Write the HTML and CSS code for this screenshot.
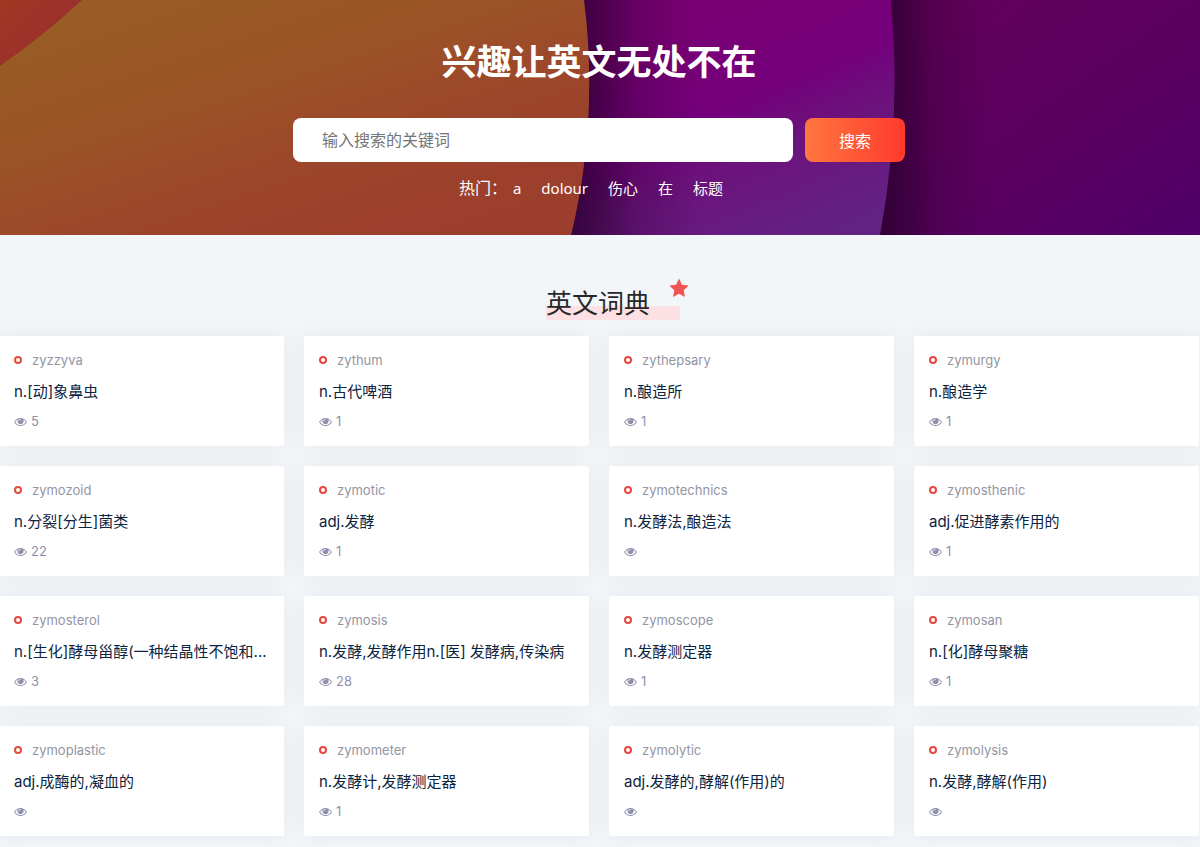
FILE: index.html
```html
<!DOCTYPE html>
<html lang="zh-CN">
<head>
<meta charset="utf-8">
<meta name="viewport" content="width=device-width, initial-scale=1">
<title>英文词典</title>
<link rel="stylesheet" href="styles.css">
</head>
<body>
<header class="hero">
  <svg class="hero-art" viewBox="0 0 1200 235" preserveAspectRatio="none" aria-hidden="true">
    <defs>
      <linearGradient id="far" gradientUnits="userSpaceOnUse" x1="960" y1="0" x2="1160" y2="280">
        <stop offset="0" stop-color="#63005c"/><stop offset=".5" stop-color="#5a0060"/><stop offset="1" stop-color="#4e006a"/>
      </linearGradient>
      <linearGradient id="mid" gradientUnits="userSpaceOnUse" x1="700" y1="20" x2="800" y2="260">
        <stop offset="0" stop-color="#7a0075"/><stop offset=".35" stop-color="#74007c"/><stop offset=".55" stop-color="#6c127c"/><stop offset="1" stop-color="#622484"/>
      </linearGradient>
      <linearGradient id="near" gradientUnits="userSpaceOnUse" x1="160" y1="0" x2="250" y2="270">
        <stop offset="0" stop-color="#985c24"/><stop offset=".5" stop-color="#9c5028"/><stop offset="1" stop-color="#9c4429"/>
      </linearGradient>
      <linearGradient id="warm" gradientUnits="userSpaceOnUse" x1="400" y1="40" x2="470" y2="260">
        <stop offset="0" stop-color="#9c3c2e" stop-opacity="0"/><stop offset="1" stop-color="#9c3c2e" stop-opacity=".8"/>
      </linearGradient>
      <linearGradient id="corner" gradientUnits="userSpaceOnUse" x1="0" y1="10" x2="40" y2="45">
        <stop offset="0" stop-color="#9f3723"/><stop offset="1" stop-color="#9c302c"/>
      </linearGradient>
      <linearGradient id="shade" x1="0" y1="0" x2="1" y2="0">
        <stop offset="0" stop-color="#200024" stop-opacity=".72"/><stop offset=".2" stop-color="#200024" stop-opacity=".55"/><stop offset=".5" stop-color="#200024" stop-opacity=".22"/><stop offset="1" stop-color="#200024" stop-opacity="0"/>
      </linearGradient>
    </defs>
    <rect width="1200" height="235" fill="url(#far)"/>
    <rect x="880" width="110" height="235" fill="url(#shade)"/>
    <path d="M0 0H891Q902 118 880 235H0Z" fill="url(#mid)"/>
    <path d="M571 0H700V235H571Z" fill="url(#shade)"/>
    <path d="M0 0H584Q599 118 571 235H0Z" fill="url(#near)"/>
    <path d="M0 0H584Q599 118 571 235H0Z" fill="url(#warm)"/>
    <path d="M0 0H82Q43 36 0 66Z" fill="url(#corner)"/>
  </svg>
  <div class="hero-body">
    <h1 class="hero-title">兴趣让英文无处不在</h1>
    <form class="search">
      <input class="search-input" type="text" placeholder="输入搜索的关键词" aria-label="输入搜索的关键词">
      <button class="search-button" type="submit">搜索</button>
    </form>
    <nav class="hot" aria-label="热门">
      <span class="hot-label">热门：</span>
      <a href="#">a</a><a href="#">dolour</a><a href="#">伤心</a><a href="#">在</a><a href="#">标题</a>
    </nav>
  </div>
</header>
<svg class="sprite" aria-hidden="true">
  <symbol id="eye" viewBox="0 0 1792 1280">
    <path fill="currentColor" d="M1664 704q-152-236-381-353 61 104 61 225 0 185-131.500 316.500t-316.500 131.500-316.500-131.500-131.500-316.500q0-121 61-225-229 117-381 353 133 205 333.500 326.500t434.500 121.500 434.500-121.500 333.500-326.500zm-720-384q0-20-14-34t-34-14q-125 0-214.500 89.500t-89.500 214.500q0 20 14 34t34 14 34-14 14-34q0-86 61-147t147-61q20 0 34-14t14-34zm848 384q0 34-20 69-140 230-376.500 368.500t-499.500 138.500-499.500-139-376.500-368q-20-35-20-69t20-69q140-229 376.500-368t499.500-139 499.500 139 376.500 368q20 35 20 69z"/>
  </symbol>
</svg>
<main class="section">
  <h2 class="section-title"><span class="section-text">英文词典</span>
    <svg class="section-star" viewBox="0 0 20 20" aria-hidden="true"><path fill="#f05454" d="M10 .5l2.900 6.200 6.800.8-5 4.700 1.300 6.900-6-3.400-6 3.400 1.300-6.900-5-4.700 6.800-.8z"/></svg>
  </h2>
  <div class="grid">
    <a class="card" href="#"><span class="word">zyzzyva</span><h3 class="meaning">n.[动]象鼻虫</h3><span class="views"><svg class="eye"><use href="#eye"/></svg>5</span></a>
    <a class="card" href="#"><span class="word">zythum</span><h3 class="meaning">n.古代啤酒</h3><span class="views"><svg class="eye"><use href="#eye"/></svg>1</span></a>
    <a class="card" href="#"><span class="word">zythepsary</span><h3 class="meaning">n.酿造所</h3><span class="views"><svg class="eye"><use href="#eye"/></svg>1</span></a>
    <a class="card" href="#"><span class="word">zymurgy</span><h3 class="meaning">n.酿造学</h3><span class="views"><svg class="eye"><use href="#eye"/></svg>1</span></a>
    <a class="card" href="#"><span class="word">zymozoid</span><h3 class="meaning">n.分裂[分生]菌类</h3><span class="views"><svg class="eye"><use href="#eye"/></svg>22</span></a>
    <a class="card" href="#"><span class="word">zymotic</span><h3 class="meaning">adj.发酵</h3><span class="views"><svg class="eye"><use href="#eye"/></svg>1</span></a>
    <a class="card" href="#"><span class="word">zymotechnics</span><h3 class="meaning">n.发酵法,酿造法</h3><span class="views"><svg class="eye"><use href="#eye"/></svg></span></a>
    <a class="card" href="#"><span class="word">zymosthenic</span><h3 class="meaning">adj.促进酵素作用的</h3><span class="views"><svg class="eye"><use href="#eye"/></svg>1</span></a>
    <a class="card" href="#"><span class="word">zymosterol</span><h3 class="meaning">n.[生化]酵母甾醇(一种结晶性不饱和...</h3><span class="views"><svg class="eye"><use href="#eye"/></svg>3</span></a>
    <a class="card" href="#"><span class="word">zymosis</span><h3 class="meaning">n.发酵,发酵作用n.[医] 发酵病,传染病</h3><span class="views"><svg class="eye"><use href="#eye"/></svg>28</span></a>
    <a class="card" href="#"><span class="word">zymoscope</span><h3 class="meaning">n.发酵测定器</h3><span class="views"><svg class="eye"><use href="#eye"/></svg>1</span></a>
    <a class="card" href="#"><span class="word">zymosan</span><h3 class="meaning">n.[化]酵母聚糖</h3><span class="views"><svg class="eye"><use href="#eye"/></svg>1</span></a>
    <a class="card" href="#"><span class="word">zymoplastic</span><h3 class="meaning">adj.成酶的,凝血的</h3><span class="views"><svg class="eye"><use href="#eye"/></svg></span></a>
    <a class="card" href="#"><span class="word">zymometer</span><h3 class="meaning">n.发酵计,发酵测定器</h3><span class="views"><svg class="eye"><use href="#eye"/></svg>1</span></a>
    <a class="card" href="#"><span class="word">zymolytic</span><h3 class="meaning">adj.发酵的,酵解(作用)的</h3><span class="views"><svg class="eye"><use href="#eye"/></svg></span></a>
    <a class="card" href="#"><span class="word">zymolysis</span><h3 class="meaning">n.发酵,酵解(作用)</h3><span class="views"><svg class="eye"><use href="#eye"/></svg></span></a>
  </div>
</main>
</body>
</html>
```
FILE: styles.css
```css
* { box-sizing: border-box; }

body {
  margin: 0;
  background: #f3f6f9;
  color: #0c2440;
  font-family: Inter, "Noto Sans CJK SC", sans-serif;
  font-size: 15px;
}

a { color: inherit; text-decoration: none; }

.hero {
  position: relative;
  overflow: hidden;
  background: #5c005c;
  color: #fff;
}

.hero-art {
  position: absolute;
  inset: 0;
  width: 100%;
  height: 100%;
}

.hero-body {
  position: relative;
  display: flex;
  flex-direction: column;
  align-items: center;
  padding: 36px 16px 35px 14px;
}

.hero-title {
  margin: 0 0 30px;
  font-size: 35px;
  line-height: 52px;
  font-weight: 700;
}

.search {
  display: flex;
  gap: 12px;
  width: 100%;
  max-width: 612px;
}

.search-input,
.search-button {
  height: 44px;
  border: 0;
  border-radius: 8px;
  font-family: inherit;
  font-size: 16px;
}

.search-input {
  flex: 1;
  min-width: 0;
  padding: 0 29px;
  background: #fff;
}

.search-input::placeholder { color: #757575; opacity: 1; }

.search-button {
  width: 100px;
  background: linear-gradient(90deg, #ff7640, #ff3a2d);
  color: #fff;
}

.hot {
  display: flex;
  gap: 20px;
  margin-top: 14px;
  padding-right: 16px;
  font-family: "Noto Sans", "Noto Sans CJK SC", sans-serif;
  line-height: 24px;
}

.hot-label { margin-right: -14px; font-size: 16px; }

.sprite { position: absolute; width: 0; height: 0; }

.section { padding: 51px 2px 20px 0; }

.section-title {
  position: relative;
  width: max-content;
  margin: 0 auto 14px;
  padding-right: 2px;
  font-size: 26px;
  line-height: 36px;
  font-weight: 400;
  color: #282828;
}

.section-title::before {
  content: "";
  position: absolute;
  top: 20px;
  left: 0;
  width: 134px;
  height: 14px;
  background: #fde0e3;
}

.section-text { position: relative; }

.section-star {
  position: absolute;
  top: -8px;
  left: 123px;
  width: 20px;
  height: 20px;
}

.grid {
  display: grid;
  grid-template-columns: repeat(4, minmax(0, 1fr));
  gap: 20px;
  margin: 0 -1px;
}

.card {
  display: flex;
  flex-direction: column;
  padding: 14px 14px 16px 15px;
  border-radius: 2px;
  background: #fff;
  box-shadow: 0 0 20px rgba(60, 70, 90, .08);
}

.word {
  display: flex;
  align-items: center;
  gap: 10px;
  color: #9395a3;
  font-size: 13px;
  line-height: 20px;
}

.word::before {
  content: "";
  box-sizing: border-box;
  width: 8px;
  height: 8px;
  border: 2px solid #e5483c;
  border-radius: 50%;
}

.meaning {
  overflow: hidden;
  margin: 10px 0 8px;
  font-size: 15px;
  line-height: 24px;
  font-weight: 400;
  text-overflow: ellipsis;
  white-space: nowrap;
}

.views {
  display: flex;
  align-items: center;
  gap: 4px;
  min-height: 18px;
  color: #8f90ab;
  font-size: 13px;
  line-height: 18px;
}

.eye { width: 13px; height: 9px; }
```
